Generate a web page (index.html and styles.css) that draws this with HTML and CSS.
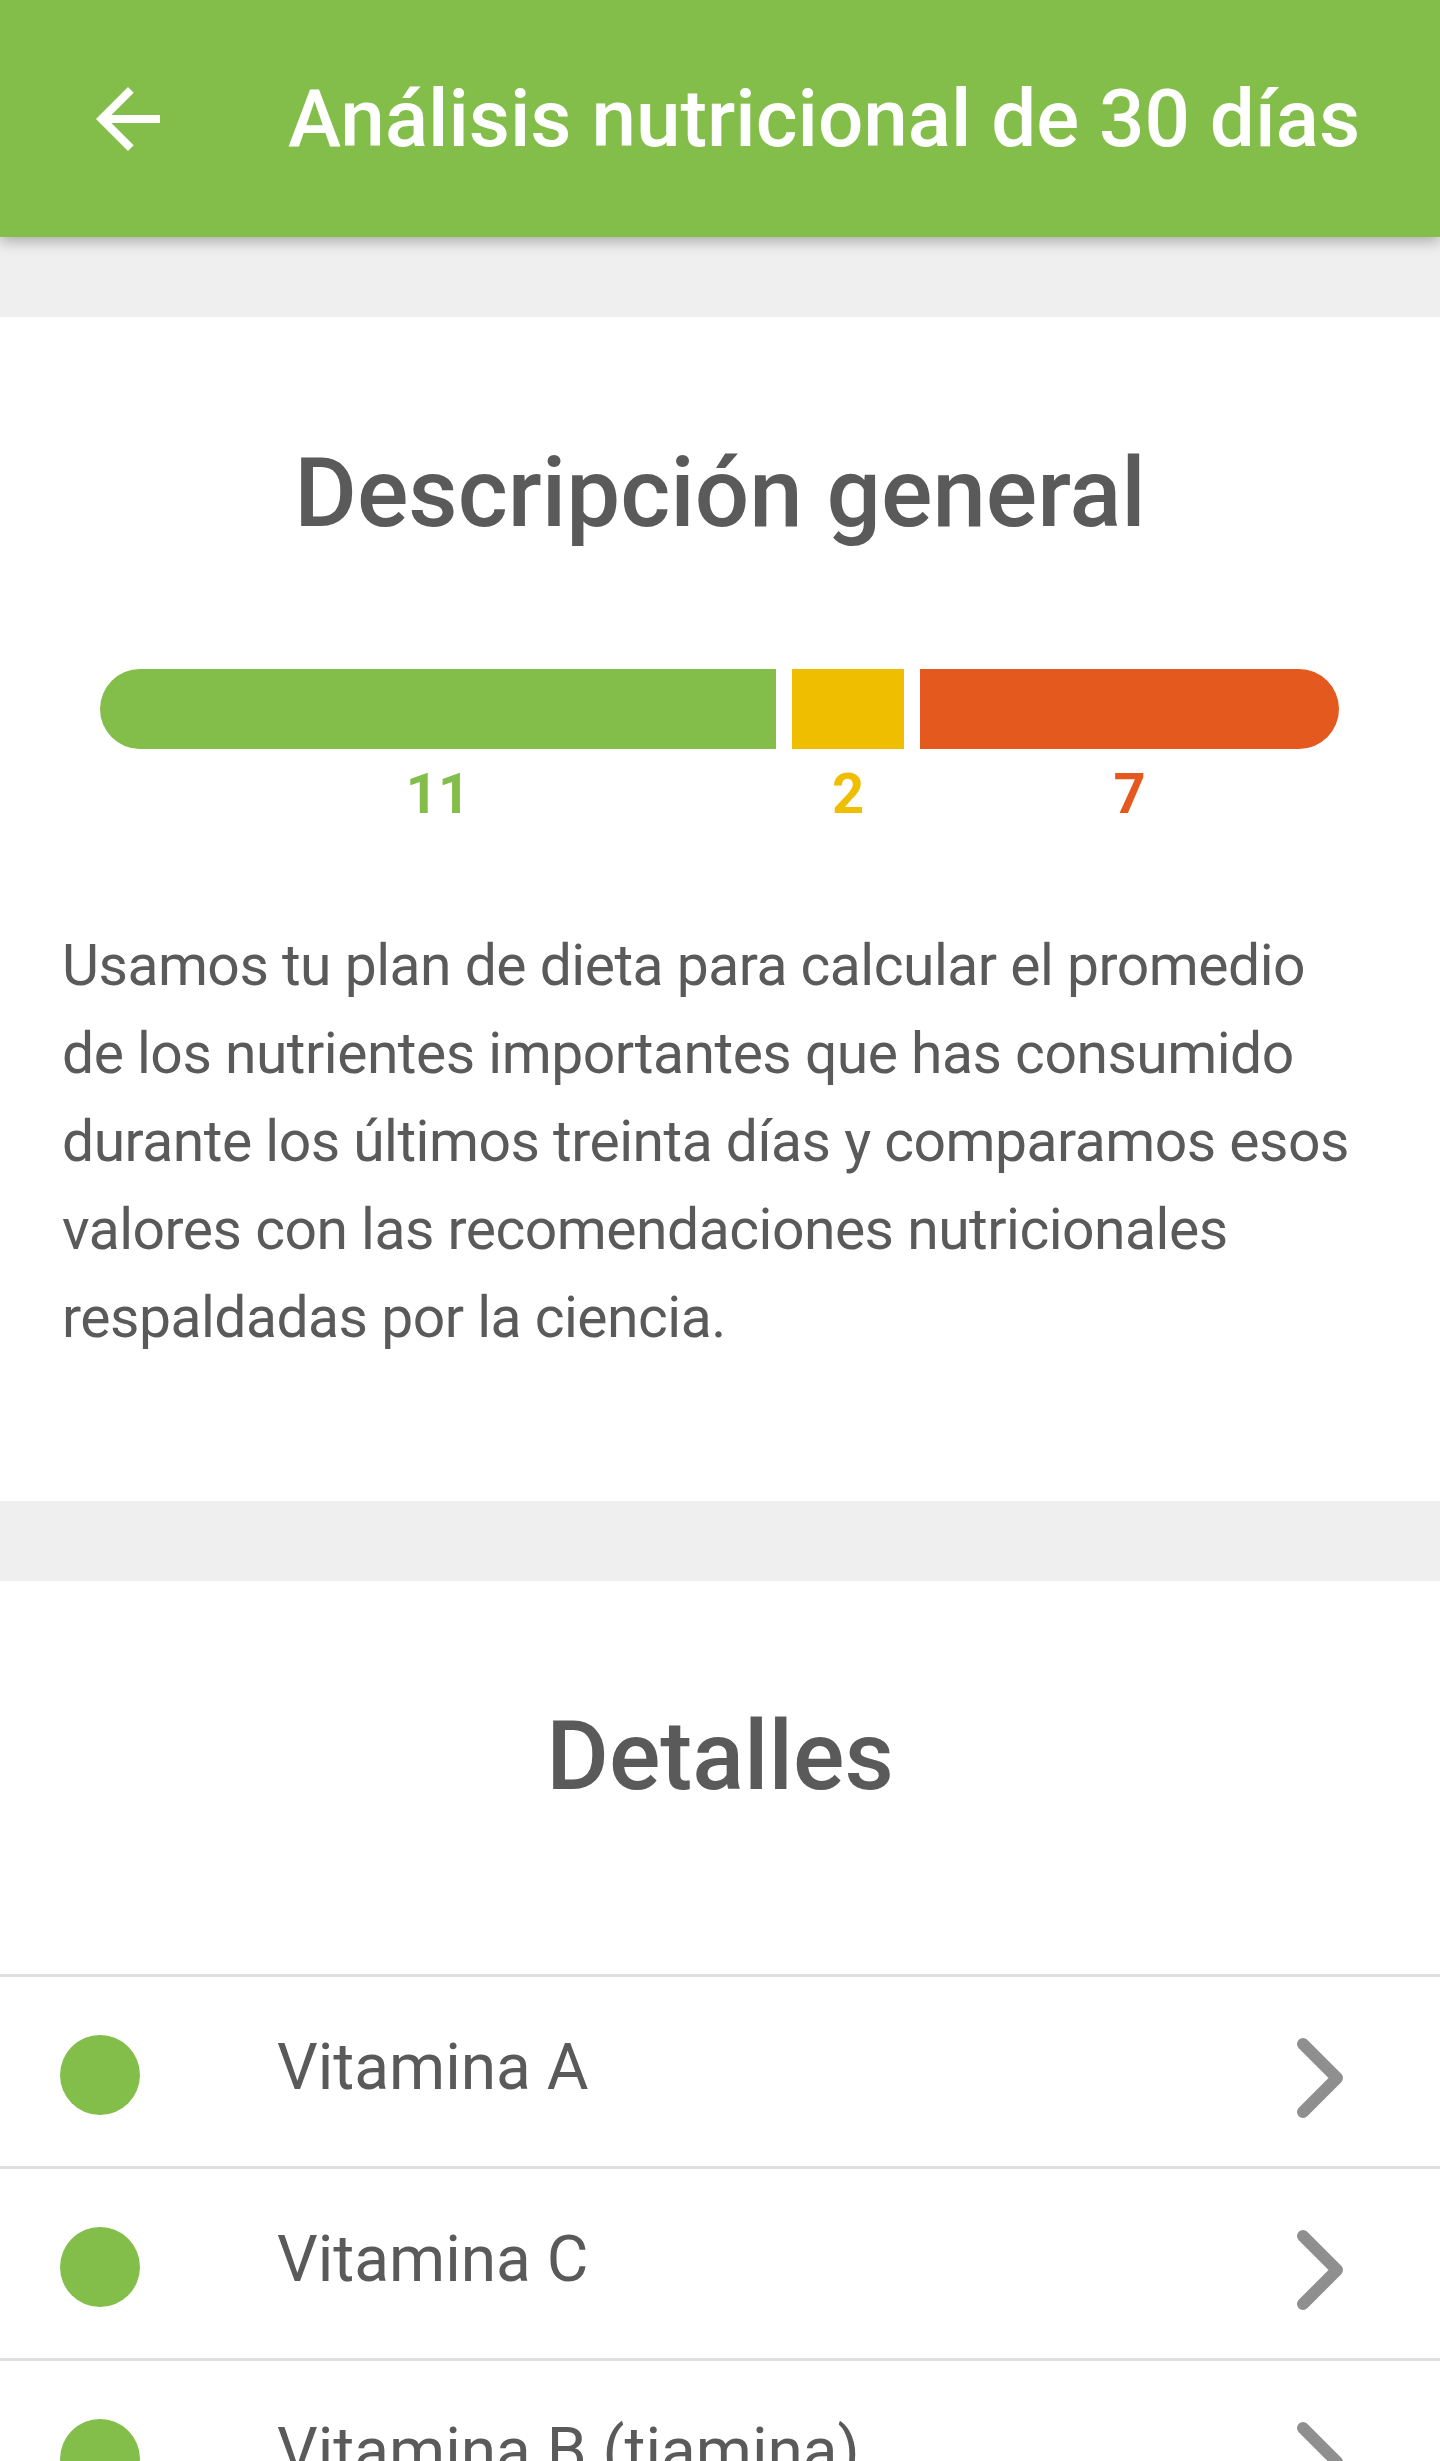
FILE: index.html
```html
<!DOCTYPE html>
<html lang="es">
<head>
    <meta charset="UTF-8">
    <meta name="viewport" content="width=device-width, initial-scale=1.0">
    <title>Análisis nutricional de 30 días</title>
    <link rel="stylesheet" href="styles.css">
</head>
<body>
    <header class="app-bar">
        <svg class="back-icon" viewBox="0 0 24 24" width="96" height="96">
            <path d="M20 11H7.83l5.59-5.59L12 4l-8 8 8 8 1.41-1.41L7.83 13H20v-2z" fill="#fff"/>
        </svg>
        <h1>Análisis nutricional de 30 días</h1>
    </header>

    <main class="content">
        <section class="card overview">
            <h2>Descripción general</h2>
            <div class="score-bar">
                <div class="segment good" style="width: 676px"></div>
                <div class="segment fair" style="width: 112px"></div>
                <div class="segment poor" style="width: 419px"></div>
            </div>
            <div class="score-counts">
                <span class="good" style="width: 676px">11</span>
                <span class="fair" style="width: 112px">2</span>
                <span class="poor" style="width: 419px">7</span>
            </div>
            <p class="summary">Usamos tu plan de dieta para calcular el promedio de los nutrientes importantes que has consumido durante los últimos treinta días y comparamos esos valores con las recomendaciones nutricionales respaldadas por la ciencia.</p>
        </section>

        <section class="card details">
            <h2>Detalles</h2>
            <ul class="nutrient-list">
                <li class="nutrient">
                    <span class="dot good"></span>
                    <span class="name">Vitamina A</span>
                    <svg class="chevron" viewBox="0 0 50 84" width="50" height="84">
                        <polyline points="8,8 42,42 8,76" />
                    </svg>
                </li>
                <li class="nutrient">
                    <span class="dot good"></span>
                    <span class="name">Vitamina C</span>
                    <svg class="chevron" viewBox="0 0 50 84" width="50" height="84">
                        <polyline points="8,8 42,42 8,76" />
                    </svg>
                </li>
                <li class="nutrient">
                    <span class="dot good"></span>
                    <span class="name">Vitamina B (tiamina)</span>
                    <svg class="chevron" viewBox="0 0 50 84" width="50" height="84">
                        <polyline points="8,8 42,42 8,76" />
                    </svg>
                </li>
            </ul>
        </section>
    </main>
</body>
</html>
```

FILE: styles.css
```css
body {
    font-family: Roboto, "Noto Sans", sans-serif;
    background-color: #efefef;
    margin: 0;
    padding: 0;
    color: #5a5a5a;
}

.app-bar {
    position: relative;
    z-index: 1;
    display: flex;
    align-items: center;
    height: 237px;
    padding-left: 80px;
    background-color: #84be4a;
    box-shadow: 0 4px 14px rgba(0, 0, 0, 0.3);
}

.back-icon {
    flex-shrink: 0;
    margin-right: 112px;
}

.app-bar h1 {
    margin: 0;
    color: #fff;
    font-size: 80px;
    font-weight: 500;
    line-height: 1;
}

.content {
    display: flex;
    flex-direction: column;
    gap: 80px;
    padding-top: 80px;
}

.card {
    background-color: #fff;
}

.card h2 {
    margin: 0;
    text-align: center;
    font-size: 96px;
    font-weight: 500;
    line-height: 98px;
}

/* overview */

.overview {
    padding: 127px 0 139px;
}

.score-bar {
    display: flex;
    gap: 16px;
    margin: 127px 100px 0;
    height: 80px;
}

.segment.good {
    background-color: #84be4a;
    border-radius: 40px 0 0 40px;
}

.segment.fair {
    background-color: #f0be00;
}

.segment.poor {
    background-color: #e45a1e;
    border-radius: 0 40px 40px 0;
}

.score-counts {
    display: flex;
    gap: 16px;
    margin: 17px 100px 0;
    font-size: 56px;
    font-weight: 700;
    line-height: 1;
}

.score-counts span {
    text-align: center;
}

.score-counts .good { color: #84be4a; }
.score-counts .fair { color: #f0be00; }
.score-counts .poor { color: #e45a1e; }

.summary {
    margin: 100px 70px 0 62px;
    font-size: 57px;
    letter-spacing: -0.5px;
    line-height: 88px;
}

/* details */

.details {
    padding-top: 126px;
    padding-bottom: 200px;
}

.nutrient-list {
    list-style-type: none;
    margin: 169px 0 0;
    padding: 0;
}

.nutrient {
    display: flex;
    align-items: center;
    height: 189px;
    padding: 0 95px 0 60px;
    border-top: 3px solid #e0e0e0;
}

.dot {
    flex-shrink: 0;
    width: 80px;
    height: 80px;
    border-radius: 50%;
    margin-right: 137px;
    margin-top: 6px;
}

.dot.good {
    background-color: #84be4a;
}

.nutrient .name {
    flex: 1;
    font-size: 64px;
    line-height: 1;
    margin-bottom: 8px;
}

.chevron {
    margin-top: 12px;
}

.chevron polyline {
    fill: none;
    stroke: #8f8f8f;
    stroke-width: 12;
    stroke-linecap: round;
    stroke-linejoin: round;
}
```
